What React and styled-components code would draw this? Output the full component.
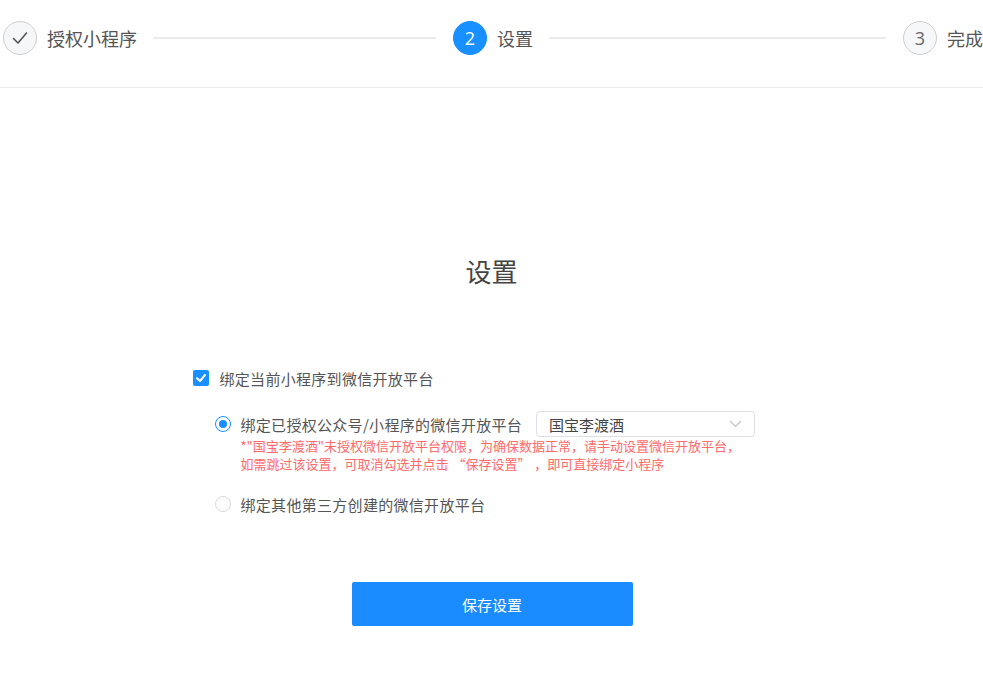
import React from "react";
import styled, { createGlobalStyle } from "styled-components";

const Global = createGlobalStyle`
  html, body { margin: 0; padding: 0; background: #fff; }
  body {
    overflow: hidden;
    font-family: "Noto Sans CJK SC", "Noto Sans", sans-serif;
    color: #555;
  }
`;

const Page = styled.div`
  width: 983px;
  height: 678px;
  overflow: hidden;
  background: #fff;
`;

const Header = styled.div`
  height: 87px;
  box-sizing: content-box;
  border-bottom: 1px solid #ececec;
  display: flex;
  align-items: flex-start;
  padding: 0 0 0 3px;
  white-space: nowrap;
`;

const Step = styled.div`
  flex: 0 0 450px;
  height: 34px;
  margin-top: 21px;
  display: flex;
  align-items: center;
`;

const Circle = styled.div`
  flex: 0 0 auto;
  width: 34px;
  height: 34px;
  box-sizing: border-box;
  border-radius: 50%;
  display: flex;
  align-items: center;
  justify-content: center;
  font-size: 18px;
  font-family: "Open Sans", "Noto Sans", sans-serif;
  border: 1px solid ${(p) => (p.$active ? "#1890ff" : "#cfcfcf")};
  background: ${(p) => (p.$active ? "#1890ff" : "#f6f7f9")};
  color: ${(p) => (p.$active ? "#fff" : "#666")};
`;

const StepText = styled.span`
  margin-left: 10px;
  font-size: 18px;
  color: #555;
  line-height: 24px;
`;

const StepLine = styled.div`
  flex: 1;
  height: 2px;
  background: #ebebeb;
  margin: 0 17px 0 16px;
`;

const Main = styled.div`
  display: flex;
  flex-direction: column;
  align-items: center;
`;

const Title = styled.h1`
  margin: 167px 0 0;
  font-size: 26px;
  line-height: 32px;
  font-weight: 400;
  color: #444;
`;

const Form = styled.div`
  width: 598px;
  margin-top: 81px;
  display: flex;
  flex-direction: column;
`;

const CheckRow = styled.label`
  display: flex;
  align-items: center;
  height: 20px;
  font-size: 15px;
  letter-spacing: 0.3px;
  color: #555;
`;

const CheckBox = styled.span`
  width: 16px;
  height: 16px;
  border-radius: 2px;
  background: #1890ff;
  display: flex;
  align-items: center;
  justify-content: center;
  margin-right: 11px;
`;

const Options = styled.div`
  padding-left: 22px;
  margin-top: 23px;
  display: flex;
  flex-direction: column;
`;

const RadioRow = styled.div`
  display: flex;
  align-items: center;
  height: ${(p) => p.$h || 26}px;
  margin-top: ${(p) => p.$mt || 0}px;
  font-size: 15px;
  letter-spacing: 0.3px;
  color: #555;
`;

const Radio = styled.span`
  width: 16px;
  height: 16px;
  box-sizing: border-box;
  border-radius: 50%;
  border: 1px solid ${(p) => (p.$checked ? "#1890ff" : "#d9d9d9")};
  background: #fff;
  margin-right: 10px;
  display: flex;
  align-items: center;
  justify-content: center;
  &::after {
    content: "";
    display: ${(p) => (p.$checked ? "block" : "none")};
    width: 8px;
    height: 8px;
    border-radius: 50%;
    background: #1890ff;
  }
`;

const Select = styled.div`
  margin-left: 14px;
  width: 219px;
  height: 26px;
  box-sizing: border-box;
  border: 1px solid #dcdfe6;
  border-radius: 4px;
  display: flex;
  align-items: center;
  justify-content: space-between;
  padding: 0 12px 0 12px;
  font-size: 15px;
  letter-spacing: 0;
  color: #444;
`;

const Note = styled.div`
  padding-left: 26px;
  font-size: 13px;
  line-height: 18px;
  color: #ff6a6a;
`;

const Quote = styled.span`
  display: inline-block;
  width: 1.3em;
  text-align: ${(p) => (p.$open ? "right" : "left")};
`;

const Button = styled.button`
  margin-top: 68px;
  margin-left: 1px;
  width: 281px;
  height: 44px;
  border: none;
  border-radius: 2px;
  background: #1a8cff;
  color: #fff;
  font-size: 15px;
  font-family: "Noto Sans CJK SC", "Noto Sans", sans-serif;
  cursor: pointer;
`;

export default function App() {
  return (
    <Page>
      <Global />
      <Header>
        <Step>
          <Circle>
            <svg width="18" height="18" viewBox="0 0 18 18" fill="none">
              <polyline points="2.5,9.5 7,14 15.5,4" stroke="#555" strokeWidth="1.6" strokeLinecap="round" strokeLinejoin="round" />
            </svg>
          </Circle>
          <StepText>授权小程序</StepText>
          <StepLine />
        </Step>
        <Step>
          <Circle $active>2</Circle>
          <StepText>设置</StepText>
          <StepLine />
        </Step>
        <Step>
          <Circle>3</Circle>
          <StepText>完成</StepText>
        </Step>
      </Header>
      <Main>
        <Title>设置</Title>
        <Form>
          <CheckRow>
            <CheckBox>
              <svg width="12" height="12" viewBox="0 0 12 12" fill="none">
                <polyline points="2,6.2 5,9 10,3" stroke="#fff" strokeWidth="2" strokeLinecap="round" strokeLinejoin="round" />
              </svg>
            </CheckBox>
            绑定当前小程序到微信开放平台
          </CheckRow>
          <Options>
            <RadioRow>
              <Radio $checked />
              绑定已授权公众号/小程序的微信开放平台
              <Select>
                <span>国宝李渡酒</span>
                <svg width="13" height="8" viewBox="0 0 13 8" fill="none">
                  <polyline points="1,1 6.5,6.5 12,1" stroke="#c0c4cc" strokeWidth="1.2" />
                </svg>
              </Select>
            </RadioRow>
            <Note>
              *"国宝李渡酒"未授权微信开放平台权限，为确保数据正常，请手动设置微信开放平台，
              <br />
              如需跳过该设置，可取消勾选并点击<Quote $open>“</Quote>保存设置<Quote>”</Quote>，即可直接绑定小程序
            </Note>
            <RadioRow $h={20} $mt={21}>
              <Radio />
              绑定其他第三方创建的微信开放平台
            </RadioRow>
          </Options>
        </Form>
        <Button>保存设置</Button>
      </Main>
    </Page>
  );
}
